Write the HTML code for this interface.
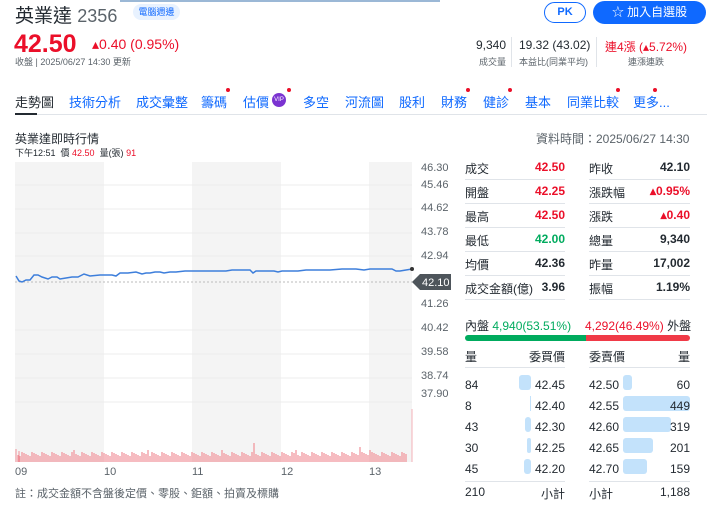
<!DOCTYPE html>
<html><head><meta charset="utf-8"><style>
*{margin:0;padding:0;box-sizing:border-box}
body{width:712px;height:513px;background:#fff;font-family:"Liberation Sans","Noto Sans CJK TC",sans-serif;color:#232a31;position:relative;overflow:hidden;font-size:12px}
.a{position:absolute;white-space:nowrap}
.r{color:#eb0f29}.g{color:#00ab5e}
.tabs span{position:absolute;top:92px;font-size:13px;color:#0f69ff}
.dot{position:absolute;width:4px;height:4px;border-radius:2px;background:#eb0f29}
.tb div{position:absolute;font-size:12px}
.row{position:absolute;height:1px;background:#e0e4e9}
.yl{position:absolute;left:421px;font-size:11px;color:#5b636a}
</style></head><body>
<div class="a" style="left:120px;top:0;width:320px;height:2px;background:#9bb8d6"></div>
<div class="a" style="left:15px;top:1px;font-size:19px;color:#232a31">英業達 <span style="color:#5b636a;font-size:18px">2356</span></div>
<div class="a" style="left:133px;top:4px;width:47px;height:16px;border-radius:8px;background:#e8f2ff;color:#0f69ff;font-size:9px;text-align:center;line-height:16px">電腦週邊</div>
<div class="a" style="left:544px;top:2px;width:42px;height:21px;border:1px solid #0f69ff;border-radius:11px;color:#0f69ff;font-size:11px;font-weight:bold;text-align:center;line-height:19px">PK</div>
<div class="a" style="left:593px;top:1px;width:113px;height:23px;border-radius:12px;background:#0f69ff;color:#fff;font-size:12px;text-align:center;line-height:23px">☆ 加入自選股</div>
<div class="a r" style="left:14px;top:30px;font-size:25px;font-weight:bold">42.50</div>
<div class="a r" style="left:92px;top:36px;font-size:14px">▴0.40 (0.95%)</div>
<div class="a" style="left:15px;top:55px;font-size:9px;color:#5b636a">收盤 | 2025/06/27 14:30 更新</div>
<div class="a" style="left:474px;top:38px;font-size:12px;width:32px;text-align:right">9,340</div>
<div class="a" style="left:474px;top:55px;font-size:9px;color:#5b636a;width:32px;text-align:right">成交量</div>
<div class="a" style="left:511px;top:37px;width:1px;height:30px;background:#e0e4e9"></div>
<div class="a" style="left:519px;top:38px;font-size:12px">19.32 (43.02)</div>
<div class="a" style="left:519px;top:55px;font-size:9px;color:#5b636a">本益比(同業平均)</div>
<div class="a" style="left:596px;top:37px;width:1px;height:30px;background:#e0e4e9"></div>
<div class="a r" style="left:605px;top:38px;font-size:12px">連4漲 (▴5.72%)</div>
<div class="a" style="left:628px;top:55px;font-size:9px;color:#5b636a">連漲連跌</div>
<div class="tabs">
<span style="left:15px;color:#232a31">走勢圖</span><span style="left:69px">技術分析</span><span style="left:136px">成交彙整</span><span style="left:201px">籌碼</span><span style="left:243px">估價</span><span style="left:303px">多空</span><span style="left:345px">河流圖</span><span style="left:399px">股利</span><span style="left:441px">財務</span><span style="left:483px">健診</span><span style="left:525px">基本</span><span style="left:567px">同業比較</span><span style="left:633px">更多...</span>
</div>
<div class="a" style="left:272px;top:93px;width:14px;height:14px;border-radius:7px;background:#7b33d1;color:#fff;font-size:6px;text-align:center;line-height:14px">VIP</div>
<div class="dot" style="left:226px;top:88px"></div><div class="dot" style="left:287px;top:88px"></div><div class="dot" style="left:466px;top:88px"></div><div class="dot" style="left:508px;top:88px"></div><div class="dot" style="left:616px;top:88px"></div><div class="dot" style="left:653px;top:88px"></div>
<div class="a" style="left:15px;top:114px;width:692px;height:1px;background:#e0e4e9"></div>
<div class="a" style="left:15px;top:113px;width:22px;height:2px;background:#232a31"></div>
<div class="a" style="left:15px;top:130px;font-size:12px">英業達即時行情</div>
<div class="a" style="left:15px;top:146px;font-size:9px">下午12:51 &nbsp;價 <span class="r">42.50</span> &nbsp;量(張) <span class="r">91</span></div>
<div class="a" style="left:536px;top:130px;font-size:12px;color:#5b636a">資料時間：2025/06/27 14:30</div>
<svg class="a" style="left:0;top:0" width="460" height="513">
<rect x="15" y="162" width="89" height="300" fill="#f4f4f4"/><rect x="192" y="162" width="89" height="300" fill="#f4f4f4"/><rect x="369" y="162" width="43" height="300" fill="#f4f4f4"/>
<g stroke="#ececec"><line x1="15" x2="412" y1="185" y2="185"/><line x1="15" x2="412" y1="209" y2="209"/><line x1="15" x2="412" y1="233" y2="233"/><line x1="15" x2="412" y1="256" y2="256"/><line x1="15" x2="412" y1="330" y2="330"/><line x1="15" x2="412" y1="354" y2="354"/><line x1="15" x2="412" y1="378" y2="378"/><line x1="15" x2="412" y1="402" y2="402"/></g>
<line x1="15" x2="412" y1="282" y2="282" stroke="#bbb" stroke-dasharray="2,2"/>
<polyline fill="none" stroke="#3d7edb" stroke-width="1.5" points="16,276 19,281 22,282 26,280 30,280 34,275 38,275 42,277 48,279 52,277 57,277 60,279 66,278 72,277 78,277 84,274 90,276 100,275 106,275 112,275 116,276 120,273 128,273 136,272 142,274 146,273 150,273 155,272 160,272 164,273 170,272 176,272 185,271 192,271 198,271 210,271 216,271 226,271 232,270 240,270 250,270 253,273 256,271 264,271 274,271 278,272 282,271 292,271 298,271 306,270 318,270 330,270 342,269 356,269 364,270 370,269 380,269 392,269 396,271 400,271 406,270 412,269"/>
<circle cx="412" cy="269" r="2" fill="#333"/>
<path d="M16,449 L16,462 M19,451 V462" stroke="#f08f98"/>
<g id="vb" stroke="#f08f98" stroke-width="1.2"></g>
<path d="M412,409 V462" stroke="#f3b1b7"/>
<path d="M412,282 l8,-8 h31 v16 h-31 z" fill="#4e555b"/>
<text x="422" y="286" fill="#fff" font-size="11" font-family="Liberation Sans">42.10</text>
<g font-size="11" fill="#5b636a" font-family="Liberation Sans"><text x="15" y="475">09</text><text x="104" y="475">10</text><text x="192" y="475">11</text><text x="281" y="475">12</text><text x="369" y="475">13</text></g>
</svg>
<div class="yl" style="top:162px">46.30</div><div class="yl" style="top:179px">45.46</div><div class="yl" style="top:202px">44.62</div><div class="yl" style="top:226px">43.78</div><div class="yl" style="top:250px">42.94</div><div class="yl" style="top:298px">41.26</div><div class="yl" style="top:322px">40.42</div><div class="yl" style="top:346px">39.58</div><div class="yl" style="top:370px">38.74</div><div class="yl" style="top:388px">37.90</div>
<div class="a" style="left:15px;top:485px;font-size:11px;color:#5b636a">註：成交金額不含盤後定價、零股、鉅額、拍賣及標購</div>
<div class="tb">
<div style="left:465px;top:160px">成交</div><div class="r" style="left:525px;top:160px;width:40px;text-align:right;font-weight:bold">42.50</div>
<div style="left:589px;top:160px">昨收</div><div style="left:640px;top:160px;width:50px;text-align:right;font-weight:bold">42.10</div>
<div style="left:465px;top:184px">開盤</div><div class="r" style="left:525px;top:184px;width:40px;text-align:right;font-weight:bold">42.25</div>
<div style="left:589px;top:184px">漲跌幅</div><div class="r" style="left:630px;top:184px;width:60px;text-align:right;font-weight:bold">▴0.95%</div>
<div style="left:465px;top:208px">最高</div><div class="r" style="left:525px;top:208px;width:40px;text-align:right;font-weight:bold">42.50</div>
<div style="left:589px;top:208px">漲跌</div><div class="r" style="left:630px;top:208px;width:60px;text-align:right;font-weight:bold">▴0.40</div>
<div style="left:465px;top:232px">最低</div><div class="g" style="left:525px;top:232px;width:40px;text-align:right;font-weight:bold">42.00</div>
<div style="left:589px;top:232px">總量</div><div style="left:640px;top:232px;width:50px;text-align:right;font-weight:bold">9,340</div>
<div style="left:465px;top:256px">均價</div><div style="left:525px;top:256px;width:40px;text-align:right;font-weight:bold">42.36</div>
<div style="left:589px;top:256px">昨量</div><div style="left:640px;top:256px;width:50px;text-align:right;font-weight:bold">17,002</div>
<div style="left:465px;top:280px">成交金額(億)</div><div style="left:525px;top:280px;width:40px;text-align:right;font-weight:bold">3.96</div>
<div style="left:589px;top:280px">振幅</div><div style="left:640px;top:280px;width:50px;text-align:right;font-weight:bold">1.19%</div>
</div>
<div class="row" style="left:465px;top:179px;width:100px"></div><div class="row" style="left:465px;top:203px;width:100px"></div><div class="row" style="left:465px;top:227px;width:100px"></div><div class="row" style="left:465px;top:251px;width:100px"></div><div class="row" style="left:465px;top:275px;width:100px"></div><div class="row" style="left:465px;top:299px;width:100px"></div>
<div class="row" style="left:589px;top:179px;width:101px"></div><div class="row" style="left:589px;top:203px;width:101px"></div><div class="row" style="left:589px;top:227px;width:101px"></div><div class="row" style="left:589px;top:251px;width:101px"></div><div class="row" style="left:589px;top:275px;width:101px"></div><div class="row" style="left:589px;top:299px;width:101px"></div>
<div class="a" style="left:465px;top:317px;font-size:12px">內盤 <span class="g">4,940(53.51%)</span></div>
<div class="a" style="left:585px;top:317px;font-size:12px;width:105px;text-align:right"><span class="r">4,292(46.49%)</span> 外盤</div>
<div class="a" style="left:465px;top:335px;width:122px;height:6px;background:#00ab5e;border-radius:3px 0 0 3px"></div>
<div class="a" style="left:586px;top:335px;width:104px;height:6px;background:#f03a47;border-radius:0 3px 3px 0"></div>
<div class="a" style="left:465px;top:348px;font-size:12px">量</div><div class="a" style="left:525px;top:348px;width:40px;text-align:right">委買價</div>
<div class="a" style="left:589px;top:348px">委賣價</div><div class="a" style="left:650px;top:348px;width:40px;text-align:right">量</div>
<div class="row" style="left:465px;top:367px;width:100px"></div><div class="row" style="left:589px;top:367px;width:101px"></div>
<div class="a" style="left:519px;top:375px;width:12px;height:15px;background:#c3e2fb;border-radius:3px"></div>
<div class="a" style="left:530px;top:396px;width:1px;height:15px;background:#c3e2fb"></div>
<div class="a" style="left:525px;top:417px;width:6px;height:15px;background:#c3e2fb;border-radius:3px"></div>
<div class="a" style="left:527px;top:438px;width:4px;height:15px;background:#c3e2fb;border-radius:2px"></div>
<div class="a" style="left:524px;top:459px;width:7px;height:15px;background:#c3e2fb;border-radius:3px"></div>
<div class="a" style="left:623px;top:375px;width:9px;height:15px;background:#c3e2fb;border-radius:3px"></div>
<div class="a" style="left:623px;top:396px;width:67px;height:15px;background:#c3e2fb;border-radius:3px"></div>
<div class="a" style="left:623px;top:417px;width:48px;height:15px;background:#c3e2fb;border-radius:3px"></div>
<div class="a" style="left:623px;top:438px;width:30px;height:15px;background:#c3e2fb;border-radius:3px"></div>
<div class="a" style="left:623px;top:459px;width:24px;height:15px;background:#c3e2fb;border-radius:3px"></div>
<div class="a" style="left:465px;top:375px;line-height:21px;font-size:12px">84<br>8<br>43<br>30<br>45</div>
<div class="a" style="left:525px;top:375px;line-height:21px;width:40px;text-align:right">42.45<br>42.40<br>42.30<br>42.25<br>42.20</div>
<div class="a" style="left:589px;top:375px;line-height:21px">42.50<br>42.55<br>42.60<br>42.65<br>42.70</div>
<div class="a" style="left:650px;top:375px;line-height:21px;width:40px;text-align:right">60<br>449<br>319<br>201<br>159</div>
<div class="row" style="left:465px;top:481px;width:100px"></div><div class="row" style="left:589px;top:481px;width:101px"></div>
<div class="a" style="left:465px;top:485px">210</div><div class="a" style="left:525px;top:485px;width:40px;text-align:right">小計</div>
<div class="a" style="left:589px;top:485px">小計</div><div class="a" style="left:640px;top:485px;width:50px;text-align:right">1,188</div>
<script>
var g=document.getElementById('vb'),s='';
for(var x=18;x<407;x+=2){var h=6+((x*7)%5);if(x%37==0)h=12;if(x==254)h=19;if(x==360)h=15;s+='<line x1="'+x+'" x2="'+x+'" y1="'+(462-h)+'" y2="462"/>';}
g.innerHTML=s;
</script>
</body></html>
